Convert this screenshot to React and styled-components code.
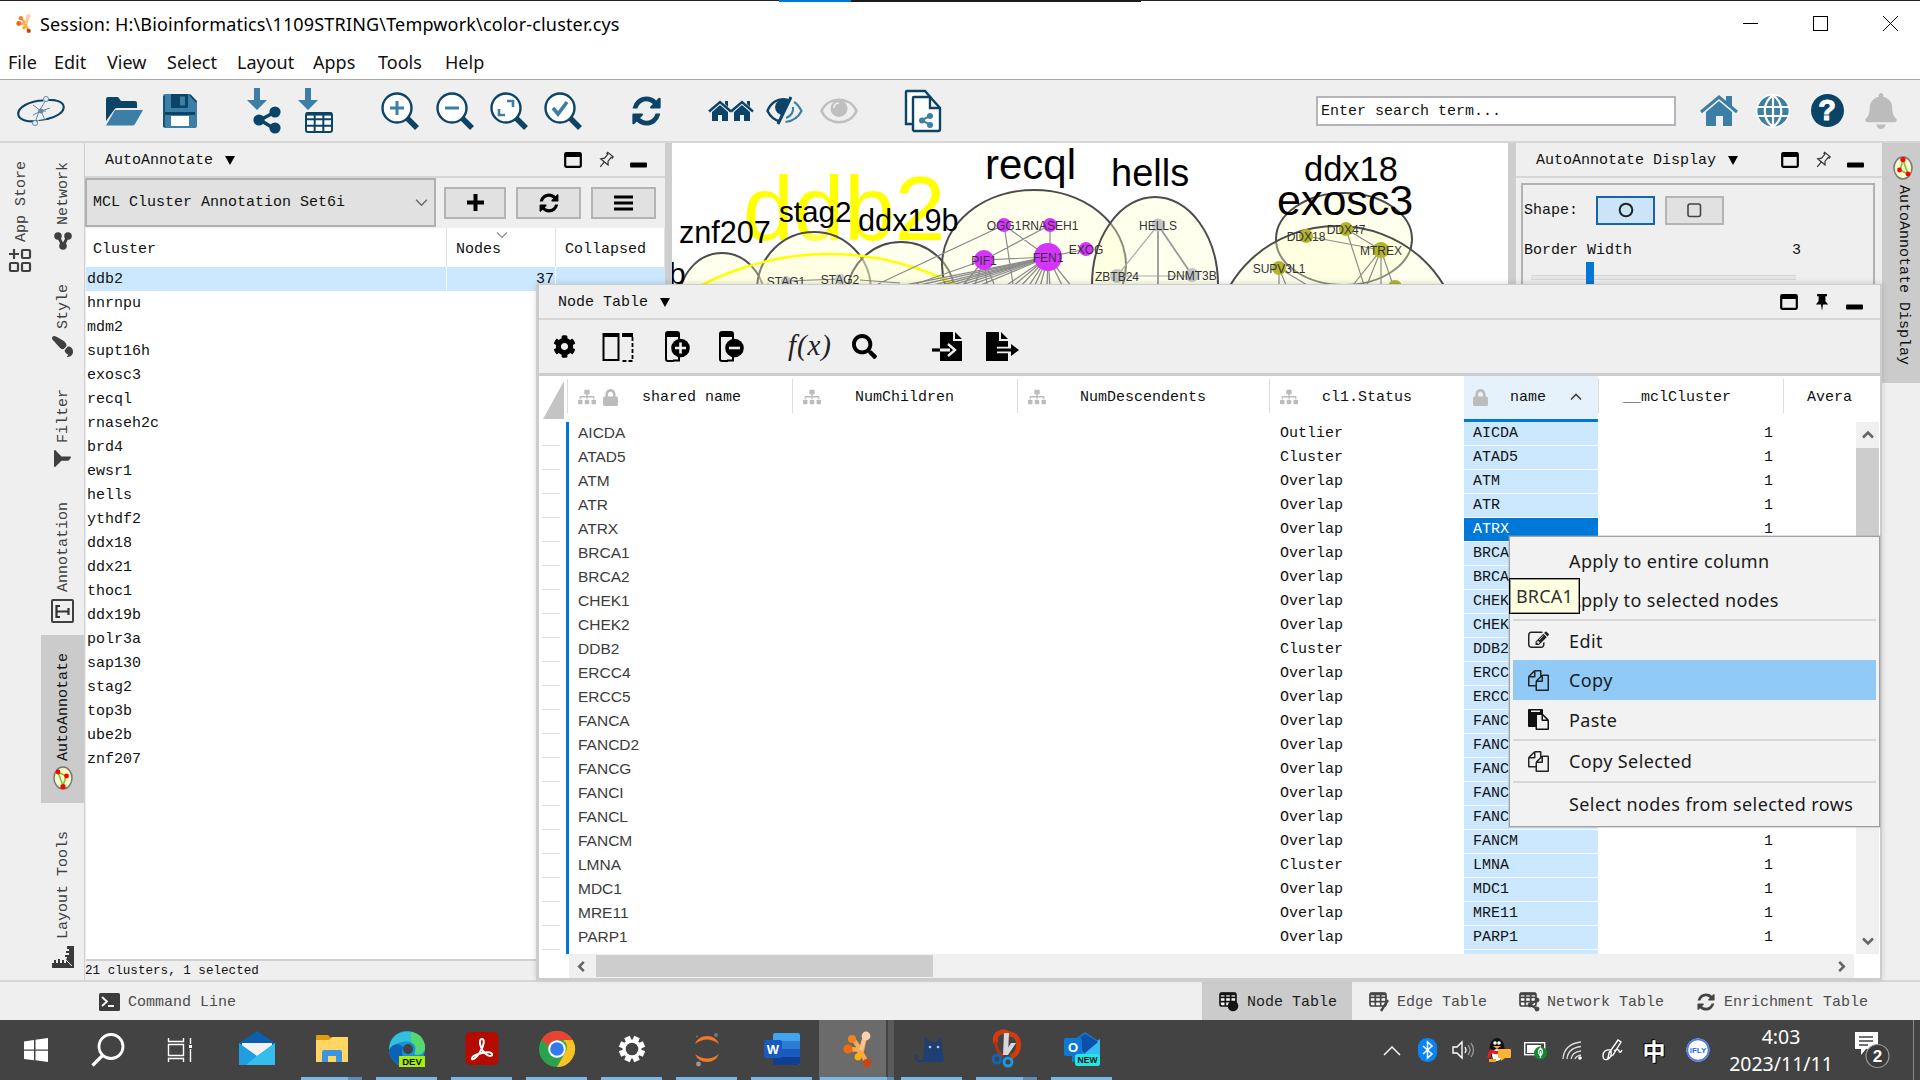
import React from "react";
import styled, { createGlobalStyle, css } from "styled-components";
import { FaSitemap, FaLock, FaCog, FaSearch, FaBell, FaFilter, FaPaintBrush } from "react-icons/fa";

const NAVY = "#0b4466";
const BLUE = "#3d7ea6";

const Global = createGlobalStyle`
  * { box-sizing: border-box; }
  html, body { margin: 0; padding: 0; overflow: hidden; background: #fff; }
  svg { display: block; flex: none; overflow: visible; }
`;

const mono = css`
  font-family: "Liberation Mono", "Courier New", monospace;
  font-size: 15px;
  white-space: pre;
`;
const ui = css`
  font-family: "Noto Sans", "Open Sans", sans-serif;
  font-size: 18px;
  white-space: pre;
`;

/* ---------- window shell ---------- */
const Screen = styled.div`
  position: relative;
  width: 1920px;
  height: 1080px;
  display: flex;
  flex-direction: column;
  overflow: hidden;
  background: #efefef;
  color: #111;
`;
const TopEdge = styled.div`
  height: 2px;
  display: flex;
  align-items: flex-start;
  background: #fff;
`;
const EdgePart = styled.i`
  width: ${(p) => p.$w}px;
  height: ${(p) => p.$h}px;
  background: ${(p) => p.$c};
`;
const TitleBar = styled.header`
  height: 43px;
  padding-left: 14px;
  display: flex;
  align-items: center;
  background: #fff;
`;
const Title = styled.div`
  ${ui}
  margin-left: 7px;
  flex: 1;
  color: #000;
  letter-spacing: 0.17px;
`;
const WindowButton = styled.div`
  width: 70px;
  padding-left: 10px;
  display: flex;
  justify-content: center;
`;
const MenuBar = styled.nav`
  height: 35px;
  display: flex;
  align-items: center;
  background: #fff;
  border-bottom: 1px solid #a9a9a9;
`;
const MenuTitle = styled.div`
  ${ui}
  width: ${(p) => p.$w}px;
  padding-left: 8px;
`;
const Toolbar = styled.div`
  height: 63px;
  border-bottom: 2px solid #d6d6d6;
  display: flex;
  align-items: center;
`;
const Tool = styled.div`
  width: ${(p) => p.$w || 54}px;
  display: flex;
  justify-content: center;
`;
const SearchBox = styled.div`
  ${mono}
  width: 360px;
  height: 30px;
  margin-left: 337px;
  margin-right: 16px;
  padding-left: 3px;
  line-height: 28px;
  border: 2px solid #b4b4ba;
  background: #fff;
`;
const Main = styled.div`
  height: 837px;
  display: flex;
`;

/* ---------- side tabs ---------- */
const TabStrip = styled.div`
  width: ${(p) => p.$w}px;
  display: flex;
  flex-direction: column;
`;
const SideTab = styled.div`
  height: ${(p) => p.$h}px;
  padding-top: ${(p) => p.$pt || 19}px;
  padding-left: ${(p) => p.$pl || 0}px;
  display: flex;
  flex-direction: column;
  align-items: center;
  gap: ${(p) => p.$gap || 7}px;
  background: ${(p) => (p.$on ? "#cbcbcb" : "transparent")};
  color: ${(p) => (p.$on ? "#111" : "#404040")};
`;
const SideText = styled.span`
  ${mono}
  writing-mode: vertical-rl;
  line-height: 20px;
  margin-left: ${(p) => (p.$down ? 0 : 2)}px;
  transform: ${(p) => (p.$down ? "none" : "rotate(180deg)")};
`;

/* ---------- dock panels ---------- */
const Panel = styled.section`
  width: ${(p) => p.$w}px;
  display: flex;
  flex-direction: column;
  border-left: 1px solid #d0d0d0;
`;
const Splitter = styled.div`
  width: 7px;
  background: #cecece;
`;
const PanelHead = styled.div`
  ${mono}
  height: 35px;
  flex: none;
  padding: 1px ${(p) => p.$pr}px 0 ${(p) => p.$pl}px;
  display: flex;
  align-items: center;
  border-bottom: 2px solid #d6d6d6;
`;
const Triangle = styled.i`
  margin-left: 12px;
  margin-right: auto;
  border: 5px solid transparent;
  border-top: 9px solid #000;
  border-bottom: 0;
`;
const HeadIcons = styled.div`
  display: flex;
  align-items: center;
  gap: 16px;
`;
const ControlRow = styled.div`
  height: 49px;
  flex: none;
  display: flex;
  align-items: center;
`;
const Combo = styled.div`
  ${mono}
  width: 351px;
  height: 49px;
  padding: 0 6px;
  display: flex;
  align-items: center;
  justify-content: space-between;
  background: #e1e1e1;
  border: 2px solid #b0b0b0;
`;
const PushButton = styled.div`
  width: ${(p) => p.$w}px;
  height: ${(p) => p.$h || 32}px;
  margin-left: ${(p) => p.$ml}px;
  display: flex;
  align-items: center;
  justify-content: center;
  background: ${(p) => (p.$on ? "#cce4f7" : "#e1e1e1")};
  border: 2px solid ${(p) => (p.$on ? "#1764a8" : "#b4b4b4")};
`;
const ClusterTable = styled.div`
  ${mono}
  flex: 1;
  margin: 1px 0 0 1px;
  background: #fff;
  border-bottom: 2px solid #cfcfcf;
`;
const ClusterHead = styled.div`
  height: 39px;
  display: grid;
  grid-template-columns: 361px 109px 1fr;
`;
const ClusterHeadCell = styled.div`
  position: relative;
  padding: 12px 0 0 ${(p) => (p.$first ? 7 : 9)}px;
  line-height: 20px;
  border-right: 1px solid #e2e2e2;
`;
const SortMark = styled.span`
  position: absolute;
  left: 49px;
  top: 1px;
`;
const ClusterRow = styled.div`
  height: 24px;
  display: grid;
  grid-template-columns: 361px 109px 1fr;
  line-height: 25px;
  background: ${(p) => (p.$on ? "#cce8ff" : "#fff")};
`;
const ClusterCell = styled.div`
  height: 24px;
  padding: 0 1px;
  text-align: ${(p) => (p.$num ? "right" : "left")};
  border-right: 1px solid #fff;
`;
const ClusterStatus = styled.div`
  ${mono}
  font-size: 12.6px;
  height: 19px;
  line-height: 21px;
`;

/* ---------- network canvas frame ---------- */
const Centre = styled.div`
  width: 836px;
  background: #fff;
`;
const CanvasFrame = styled.div`
  width: 836px;
  height: 142px;
  overflow: hidden;
`;

/* ---------- display options ---------- */
const OptionsBox = styled.div`
  ${mono}
  flex: 1;
  margin: 5px 7px 0 5px;
  border: 2px solid #b2b2b2;
`;
const OptionRow = styled.div`
  display: flex;
  align-items: center;
  height: ${(p) => p.$h}px;
  margin-top: ${(p) => p.$mt}px;
  padding-left: 1px;
`;
const OptionValue = styled.span`
  margin-left: 160px;
`;
const Slider = styled.div`
  width: 265px;
  height: 22px;
  margin: 2px 0 0 8px;
  padding-left: 55px;
  background: linear-gradient(#d6d6d6, #d6d6d6) 0 13px / 265px 1px no-repeat,
    linear-gradient(#e6e6e6, #e6e6e6) 0 14px / 265px 3px no-repeat,
    linear-gradient(#d6d6d6, #d6d6d6) 0 17px / 265px 1px no-repeat;
`;
const Thumb = styled.div`
  width: 8px;
  height: 28px;
  background: #0078d7;
`;

/* ---------- node table ---------- */
const TablePanel = styled.section`
  position: absolute;
  left: 536px;
  top: 284px;
  width: 1346px;
  height: 696px;
  display: flex;
  flex-direction: column;
  background: #efefef;
  border: solid #cdcdcd;
  border-width: 1px 2px 2px 3px;
  box-shadow: 0 -1px 6px rgba(0, 0, 0, 0.14);
`;
const TableTools = styled.div`
  height: 56px;
  flex: none;
  padding-left: 14px;
  display: flex;
  align-items: center;
  border-bottom: 3px solid #cdcdcd;
`;
const Fx = styled.span`
  font: italic 29px/30px "Liberation Serif", serif;
  letter-spacing: 0.9px;
  margin-top: -3px;
  color: #222;
`;
const TableHead = styled.div`
  ${mono}
  height: 46px;
  flex: none;
  display: flex;
  background: #fff;
`;
const Corner = styled.div`
  width: 28px;
  padding: 5px 0 0 4px;
`;
const HeadCell = styled.div`
  width: ${(p) => p.$w}px;
  height: 46px;
  padding: 0 0 4px ${(p) => (p.$on ? 8 : 11)}px;
  display: flex;
  align-items: center;
  color: #111;
  background: ${(p) =>
    p.$on
      ? "linear-gradient(#0078d7, #0078d7) 0 100% / 100% 3px no-repeat, #e5f1fb"
      : "linear-gradient(#ddd, #ddd) 0 3px / 1px 34px no-repeat"};
`;
const HeadIcon = styled.span`
  width: 24px;
  color: #bcbcbc;
`;
const HeadText = styled.span`
  margin-left: ${(p) => p.$ml}px;
`;
const TableBody = styled.div`
  height: 532px;
  flex: none;
  display: flex;
  overflow: hidden;
  background: #fff;
`;
const Rows = styled.div`
  flex: 1;
`;
const Row = styled.div`
  ${mono}
  height: 24px;
  display: flex;
  line-height: 23px;
`;
const Gutter = styled.div`
  width: 30px;
  border-right: 3px solid #0078d7;
  background: linear-gradient(#dcdcdc, #dcdcdc) 3px 23px / 18px 1px no-repeat;
`;
const SharedCell = styled.div`
  width: 711px;
  padding-left: 9px;
  line-height: 21px;
  font-family: "Liberation Sans", Arial, sans-serif;
  font-size: 15.5px;
  color: #3c3c3c;
`;
const StatusCell = styled.div`
  width: 184px;
`;
const NameCell = styled.div`
  width: 134px;
  height: 23px;
  padding-left: 9px;
  color: ${(p) => (p.$on ? "#fff" : "#111")};
  background: ${(p) => (p.$on ? "#0078d7" : "#cce8ff")};
`;
const NumCell = styled.div`
  width: 175px;
  text-align: right;
`;
const VScroll = styled.div`
  width: 23px;
  margin-right: 1px;
  display: flex;
  flex-direction: column;
  align-items: center;
  background: #f0f0f0;
`;
const ScrollEnd = styled.div`
  height: 26px;
  display: flex;
  align-items: center;
`;
const VThumb = styled.div`
  width: 23px;
  height: 180px;
  margin-bottom: auto;
  background: #cdcdcd;
`;
const HScroll = styled.div`
  flex: 1;
  display: flex;
  align-items: center;
  background: #fff;
`;
const HTrack = styled.div`
  width: 1285px;
  height: 24px;
  margin-left: 30px;
  padding: 0 7px;
  display: flex;
  align-items: center;
  background: #f0f0f0;
`;
const HThumb = styled.div`
  width: 337px;
  height: 22px;
  margin: 0 auto 0 9px;
  background: #cdcdcd;
`;

/* ---------- context menu ---------- */
const ContextMenu = styled.div`
  position: absolute;
  left: 1509px;
  top: 536px;
  width: 371px;
  height: 291px;
  padding: 4px 3px 0;
  display: flex;
  flex-direction: column;
  background: #f2f2f2;
  border: 1px solid #a0a0a0;
  box-shadow: 0 0 0 1px rgba(160, 160, 160, 0.35);
`;
const MenuItem = styled.div`
  ${ui}
  height: ${(p) => p.$h || 40}px;
  display: flex;
  align-items: center;
  color: #1a1a1a;
  letter-spacing: 0.4px;
  background: ${(p) => (p.$on ? "#91c9f7" : "transparent")};
`;
const MenuIcon = styled.span`
  width: 56px;
  padding-left: 15px;
`;
const MenuRule = styled.hr`
  width: 100%;
  height: 2px;
  margin: 0;
  border: 0;
  background: #d7d7d7;
`;
const Tooltip = styled.div`
  ${ui}
  position: absolute;
  left: 1509px;
  top: 578px;
  width: 71px;
  height: 36px;
  line-height: 34px;
  text-align: center;
  letter-spacing: 0.2px;
  color: #333;
  background: #ffffe1;
  border: 1px solid #000;
  outline: 1px solid rgba(0, 0, 0, 0.4);
  outline-offset: -2px;
`;

/* ---------- bottom bars ---------- */
const BottomBar = styled.div`
  ${mono}
  height: 40px;
  display: flex;
  align-items: center;
  border-top: 2px solid #d6d6d6;
  color: #4c4c4c;
`;
const CommandLine = styled.div`
  margin: 2px auto 0 99px;
  display: flex;
  align-items: center;
  gap: 8px;
`;
const BottomTab = styled.div`
  width: ${(p) => p.$w}px;
  height: 38px;
  padding: 2px 0 0 17px;
  display: flex;
  align-items: center;
  gap: 8px;
  color: ${(p) => (p.$on ? "#1c1c1c" : "#4c4c4c")};
  background: ${(p) => (p.$on ? "#cbcbcb" : "transparent")};
`;
const Taskbar = styled.footer`
  height: 60px;
  display: flex;
  background: #434343;
  color: #fff;
`;
const SystemButton = styled.div`
  width: 72px;
  display: flex;
  align-items: center;
  justify-content: center;
`;
const AppButton = styled.div`
  width: 75px;
  height: 60px;
  margin-left: ${(p) => p.$ml || 0}px;
  display: grid;
  grid-template-rows: 57px 3px;
  justify-items: center;
  align-items: center;
  background: ${(p) => (p.$on ? "linear-gradient(90deg, #6b6b6b 67px, #434343 67px 69px, #5a5a5a 69px)" : "none")};
`;
const Running = styled.i`
  width: ${(p) => (p.$wide ? 74 : 61)}px;
  height: 3px;
  background: ${(p) =>
    p.$stack ? `linear-gradient(90deg, #76b9ed ${p.$wide ? 67 : 47}px, #5a8db4 ${p.$wide ? 67 : 47}px)` : "#76b9ed"};
`;
const Tray = styled.div`
  margin-left: auto;
  width: 546px;
  display: flex;
  align-items: center;
`;
const TrayItem = styled.div`
  width: ${(p) => p.$w}px;
  display: flex;
  justify-content: center;
`;
const Ime = styled.span`
  font: bold 23px/30px "Noto Sans CJK SC", sans-serif;
  text-shadow: 0 0 1px #000, 1px 1px 0 #000, -1px -1px 0 #000;
`;
const Clock = styled.div`
  width: 110px;
  margin-left: 4px;
  font: 19.5px/27px "Noto Sans", sans-serif;
  text-align: center;
`;
const DesktopPeek = styled.i`
  width: 1px;
  height: 60px;
  margin-left: auto;
  margin-right: 6px;
  background: #8a8a8a;
`;

/* ---------- icons ---------- */
const Glyph = ({ d, size = 20, color = "currentColor", w }) => (
  <svg width={w || size} height={size} viewBox="0 0 1792 1792" preserveAspectRatio="none" fill={color}>
    <path d={d} />
  </svg>
);
const REFRESH =
  "M1639 1056q0 5-1 7-64 268-268 434.5t-478 166.5q-146 0-282.5-55t-243.5-157l-129 129q-19 19-45 19t-45-19-19-45v-448q0-26 19-45t45-19h448q26 0 45 19t19 45-19 45l-137 137q71 66 161 102t187 36q134 0 250-65t186-179q11-17 53-117 8-23 30-23h192q13 0 22.5 9.5t9.5 22.5zm25-800v448q0 26-19 45t-45 19h-448q-26 0-45-19t-19-45 19-45l138-138q-148-137-349-137-134 0-250 65t-186 179q-11 17-53 117-8 23-30 23h-199q-13 0-22.5-9.5t-9.5-22.5v-7q65-268 270-434.5t480-166.5q146 0 284 55.5t245 156.5l130-129q19-19 45-19t45 19 19 45z";
const COPY =
  "M1696 384q40 0 68 28t28 68v1216q0 40-28 68t-68 28h-960q-40 0-68-28t-28-68v-288h-544q-40 0-68-28t-28-68v-672q0-40 20-88t48-76l408-408q28-28 76-48t88-20h416q40 0 68 28t28 68v328q68-40 128-40h416zm-544 213l-299 299h299v-299zm-640-384l-299 299h299v-299zm196 647l316-316v-416h-384v416q0 40-28 68t-68 28h-416v640h512v-256q0-40 20-88t48-76zm956 804v-1152h-384v416q0 40-28 68t-68 28h-416v640h896z";
const PASTE =
  "M768 1664h896v-640h-416q-40 0-68-28t-28-68v-416h-384v1152zm256-1440v-64q0-13-9.5-22.5t-22.5-9.5h-704q-13 0-22.5 9.5t-9.5 22.5v64q0 13 9.5 22.5t22.5 9.5h704q13 0 22.5-9.5t9.5-22.5zm256 672h299l-299-299v299zm512 128v672q0 40-28 68t-68 28h-960q-40 0-68-28t-28-68v-160h-544q-40 0-68-28t-28-68v-1344q0-40 28-68t68-28h1088q40 0 68 28t28 68v328q21 13 36 28l408 408q28 28 48 76t20 88z";
const EDIT =
  "M888 1184l116-116-152-152-116 116v56h96v96h56zm440-720q-16-16-33 1l-350 350q-17 17-1 33t33-1l350-350q17-17 1-33zm80 594v190q0 119-84.5 203.5t-203.5 84.5h-832q-119 0-203.5-84.5t-84.5-203.5v-832q0-119 84.5-203.5t203.5-84.5h832q63 0 117 25 15 7 18 23 3 17-9 29l-49 49q-14 14-32 8-23-6-45-6h-832q-66 0-113 47t-47 113v832q0 66 47 113t113 47h832q66 0 113-47t47-113v-126q0-13 9-22l64-64q15-15 35-7t20 29zm-96-738l288 288-672 672h-288v-288zm444 132l-92 92-288-288 92-92q28-28 68-28t68 28l152 152q28 28 28 68t-28 68z";

const Svg = ({ w, h, vb, children }) => (
  <svg width={w} height={h} viewBox={vb || `0 0 ${w} ${h}`} fill="none">
    {children}
  </svg>
);
const Chevron = ({ dir = "down", w = 12, color = "#666", sw = 1.6 }) => {
  const turn = { down: 0, up: 180, left: 90, right: -90 }[dir];
  return (
    <Svg w={w} h={w} vb="0 0 12 12">
      <path d="M1 3.5l5 5 5-5" stroke={color} strokeWidth={sw} transform={`rotate(${turn} 6 6)`} />
    </Svg>
  );
};
const CytoLogo = ({ s }) => (
  <Svg w={s} h={s} vb="0 0 36 36">
    <g stroke="#f9a94e" strokeWidth="4.5" strokeLinecap="round">
      <path d="M26 5l-3 14-13-1M14 8l8 11-3 7M21 19l7 13" />
    </g>
    <path d="M25 8l-3 11" stroke="#fcc48e" strokeWidth="4" />
    <circle cx="27" cy="5" r="4.4" fill="#fbd0b0" />
    <circle cx="13" cy="8" r="4" fill="#f5821f" />
    <circle cx="9" cy="18" r="4.6" fill="#f26a0f" />
    <circle cx="19" cy="26" r="3.4" fill="#ffb300" />
    <circle cx="28" cy="32" r="4" fill="#d2420c" />
  </Svg>
);
const DockIcons = ({ pinned }) => (
  <HeadIcons>
    <Svg w={18} h={16}>
      <rect x="1.2" y="1.2" width="15.6" height="13.6" rx="1" stroke="#000" strokeWidth="2.2" />
      <path d="M1 1h16v4H1z" fill="#000" />
    </Svg>
    <Svg w={16} h={17}>
      {pinned ? (
        <path d="M3 0h10v2.3h-1.6v5l2.8 3.3H9l-1 6.4-1-6.4H1.8l2.8-3.3v-5H3z" fill="#000" />
      ) : (
        <g transform="rotate(40 8 8)">
          <path d="M4.5 1h7v1.5h-1.2v5l2.5 3H3.2l2.5-3v-5H4.500zM8 10.500V17" stroke="#333" strokeWidth="1.2" />
        </g>
      )}
    </Svg>
    <Svg w={17} h={16}>
      <rect y="10.5" width="17" height="5" rx="1" fill="#000" />
    </Svg>
  </HeadIcons>
);
const RingLogo = () => (
  <Svg w={50} h={30}>
    <g transform="rotate(-9 25 15)">
      <path d="M29 5C15 3 2 8 2 15c0 6 9 9 18 9.5" stroke={NAVY} strokeWidth="2.2" />
      <path d="M30 5c11 0 19 4 18 10-1 6-13 10-27 9" stroke={NAVY} strokeWidth="1.2" />
      <path d="M30 5c11 .5 19 4 18 10-1 5-9 8.5-19 9" stroke={NAVY} strokeWidth="2" />
    </g>
    <g stroke="#5d8ba8" strokeWidth="1">
      <path d="M30 4l-7 11-4 12M17 9l8 6 9-3M25 15l-8 4M25 15l4 9M22 15h8" />
      <circle cx="30" cy="3" r="2.5" fill="#efefef" />
      <circle cx="19" cy="27" r="2.5" fill="#efefef" />
    </g>
    <circle cx="25" cy="15" r="2.5" fill="#5d8ba8" />
  </Svg>
);
const Folder = () => (
  <Svg w={38} h={30}>
    <path d="M1 25V3q0-2 2-2h10l3 4h14q2 0 2 2v5H12q-2 0-3 2z" fill={NAVY} />
    <path d="M10 14h28l-8 14q-1 1.500-3 1.500H1z" fill={BLUE} />
  </Svg>
);
const Floppy = () => (
  <Svg w={34} h={34}>
    <path d="M2 0h25l7 7v25q0 2-2 2H2q-2 0-2-2V2q0-2 2-2z" fill={BLUE} />
    <path d="M8 0h17v13q0 1-1 1H9q-1 0-1-1zM2 18h30v3H2z" fill={NAVY} />
    <path d="M17 2.500h5v9h-5z" fill={BLUE} />
    <path d="M1 2v31M27 1l6.500 7" stroke={NAVY} strokeWidth="1.500" />
    <path d="M8 22h18v10H8z" fill="#fff" />
  </Svg>
);
const Arrow = () => <path d="M7 0h6v12h7L10 22 0 12h7z" fill={BLUE} />;
const ImportNet = () => (
  <Svg w={34} h={46}>
    <Arrow />
    <path d="M28 24L13 32l15 9" stroke={NAVY} strokeWidth="3.5" />
    <circle cx="28" cy="24" r="5.6" fill={NAVY} />
    <circle cx="12" cy="32" r="5.6" fill={NAVY} />
    <circle cx="28" cy="40" r="5.6" fill={NAVY} />
  </Svg>
);
const Grid = ({ x = 0, y = 0, w, h, c, sw = 2 }) => (
  <g transform={`translate(${x} ${y})`} stroke={c} strokeWidth={sw}>
    <rect width={w} height={h} rx="2" fill="#fff" />
    <path d={`M0 ${h / 3}H${w}M0 ${(2 * h) / 3}H${w}M${w / 3} 0V${h}M${(2 * w) / 3} 0V${h}`} />
    <path d={`M0 1H${w}`} strokeWidth={sw * 1.6} />
  </g>
);
const ImportTable = () => (
  <Svg w={36} h={46}>
    <Arrow />
    <Grid x={8} y={25} w={26} h={19} c={NAVY} />
  </Svg>
);
const Lens = ({ children }) => (
  <Svg w={38} h={38}>
    <path d="M24 24l12 12" stroke={NAVY} strokeWidth="5.5" />
    <circle cx="16" cy="16" r="14.5" fill="#fff" stroke={NAVY} strokeWidth="2.4" />
    <g stroke={BLUE} strokeWidth="3">{children}</g>
  </Svg>
);
const Houses = () => (
  <Svg w={46} h={22}>
    {[0, 22].map((x) => (
      <g key={x} transform={`translate(${x} 0)`}>
        <path d="M1 11.500L12 2l11 9.500" stroke={NAVY} strokeWidth="2.4" />
        <path d="M12 5l8 7v9h-6v-6h-4v6H4v-9zM17 1h3v6l-3-3z" fill={NAVY} />
      </g>
    ))}
  </Svg>
);
const EyeOff = () => (
  <Svg w={37} h={28}>
    <path d="M22 3C11 0 4 7 1.500 14 4 19 8 23 14 24.500" stroke={NAVY} strokeWidth="2.4" />
    <path d="M22 4a8 8 0 1 0-7 14z" fill={NAVY} />
    <path d="M25 0L12 27" stroke={NAVY} strokeWidth="3" />
    <path d="M28 5c4 2 6 6 7.500 9-3 6-8 10-16 11" stroke={BLUE} strokeWidth="2.2" />
    <path d="M27 10q1 8-7 11" stroke={BLUE} strokeWidth="2" />
  </Svg>
);
const Eye = () => (
  <Svg w={38} h={26}>
    <path d="M1.500 13C8-2 30-2 36.500 13 30 28 8 28 1.500 13z" stroke="#bfbfbf" strokeWidth="2.6" />
    <circle cx="19" cy="10.5" r="8.5" fill="#bfbfbf" />
    <path d="M14 10q0-5 5-5" stroke="#efefef" strokeWidth="1.5" />
  </Svg>
);
const NetDocs = () => (
  <Svg w={38} h={42}>
    <path d="M2 34V2q0-1 1-1h18l6 7v26z" fill="#fff" stroke={NAVY} strokeWidth="2.4" />
    <path d="M9 40V8q0-1 1-1h16l10 11v21q0 2-2 2H10z" fill="#fff" stroke={NAVY} strokeWidth="2.4" />
    <path d="M26 7v11h10" stroke={NAVY} strokeWidth="2.4" />
    <path d="M26 26l-8 4 8 5" stroke={BLUE} strokeWidth="2" />
    <circle cx="26" cy="26" r="3" fill={BLUE} />
    <circle cx="18" cy="30.5" r="3" fill={BLUE} />
    <circle cx="26" cy="35" r="3" fill={BLUE} />
  </Svg>
);
const HomeIcon = () => (
  <Svg w={38} h={32}>
    <path d="M1 17L19 2l18 15" stroke={BLUE} strokeWidth="3" />
    <path d="M19 6l13 11v14h-9V21h-7v10H6V17zM26 1h6v11l-6-5z" fill={BLUE} />
  </Svg>
);
const Globe = () => (
  <Svg w={34} h={34}>
    <circle cx="17" cy="17" r="17" fill="#fff" />
    <circle cx="17" cy="17" r="15.6" fill={BLUE} />
    <g stroke="#fff" strokeWidth="2.2">
      <path d="M17 0v34M0 13h34M0 22h34" />
      <path d="M17 1C6 9 6 25 17 33M17 1c11 8 11 24 0 32" />
    </g>
  </Svg>
);
const HelpDisc = styled.div`
  width: 33px;
  height: 33px;
  border-radius: 50%;
  background: ${NAVY};
  color: #fff;
  text-align: center;
  font: bold 29px/33px "Liberation Sans", sans-serif;
  -webkit-text-stroke: 1px #fff;
`;
const AnnotateIcon = ({ flip }) => (
  <svg width="22" height="24" viewBox="0 0 22 24">
    <g transform={flip ? "rotate(180 11 12)" : undefined}>
      <ellipse cx="11" cy="12" rx="9" ry="11" fill="#fbfbc8" stroke="#777" strokeWidth="1.5" />
      <path d="M6 6l5 14M6 6l8 4-3 10" stroke="#7bc143" strokeWidth="1.6" fill="none" />
      <circle cx="6" cy="6" r="2.4" fill="#f00" />
      <circle cx="14.5" cy="10" r="2.4" fill="#f00" />
      <circle cx="11" cy="20.5" r="2.6" fill="#f00" />
    </g>
  </svg>
);
const StoreIcon = () => (
  <Svg w={25} h={26}>
    <path d="M6 1v10M1 6h10" stroke="#404040" strokeWidth="2.2" />
    <g stroke="#404040" strokeWidth="2.2">
      <rect x="14" y="2" width="8" height="8" rx="1" />
      <rect x="2" y="15" width="8" height="8" rx="1" />
      <rect x="14" y="15" width="8" height="8" rx="1" />
    </g>
  </Svg>
);
const NetworkTabIcon = () => (
  <Svg w={18} h={18}>
    <path d="M4 4l5 10 5-10" stroke="#404040" strokeWidth="3" />
    <circle cx="4" cy="4" r="3.8" fill="#404040" />
    <circle cx="14" cy="4" r="3.8" fill="#404040" />
    <circle cx="9" cy="14" r="3.8" fill="#404040" />
  </Svg>
);
const Rotated = styled.span`
  display: block;
  transform: rotate(${(p) => p.$deg}deg);
`;
const Boxed = styled.div`
  width: 23px;
  height: 24px;
  border: 2px solid #404040;
  border-radius: 2px;
  display: flex;
  align-items: center;
  justify-content: center;
`;
const Ruler = () => (
  <Svg w={22} h={22}>
    <path d="M22 0v22H0v-5h2v-3h2v3h2v-4h2v4h2v-3h2v3h2v-3l1-2v-1h-2v-2h4V7h-3V5h3V3h-2V0z" fill="#3a3a3a" />
    <path d="M13 13l7 7" stroke="#efefef" />
  </Svg>
);
const TableGlyph = ({ kind }) => {
  const c = kind === "node" ? "#151515" : "#444";
  return (
    <Svg w={20} h={20}>
      <Grid x={1} y={1} w={16} h={13} c={c} sw={1.7} />
      {kind === "node" && <circle cx="14" cy="14" r="5.3" fill={c} />}
      {kind === "edge" && <path d="M19 8l-7 11" stroke={c} strokeWidth="2.4" />}
      {kind === "net" && (
        <g fill={c} stroke={c}>
          <path d="M18 8l-7 5 7 4" fill="none" strokeWidth="2" />
          <circle cx="18" cy="8" r="2" />
          <circle cx="11" cy="13" r="2" />
          <circle cx="18" cy="17" r="2" />
        </g>
      )}
    </Svg>
  );
};
const Columns = () => (
  <Svg w={32} h={30}>
    <path d="M1.500 28V2h15v26z" stroke="#000" strokeWidth="2" />
    <path d="M1 1h16v4H1zM20 1h11v4H20z" fill="#000" />
    <path d="M30.500 5v24H19" stroke="#000" strokeWidth="1.8" strokeDasharray="4 2" />
  </Svg>
);
const ColumnOp = ({ plus }) => (
  <Svg w={25} h={31}>
    <path d="M9 30H3q-2 0-2-2V3q0-2 2-2h9q2 0 2 2v6" stroke="#000" strokeWidth="2" />
    <path d="M2 1h12v5H2z" fill="#000" />
    <path d="M8 29.500h6V25" stroke="#000" strokeWidth="2" />
    <circle cx="15.5" cy="17" r="9.3" fill="#000" />
    <path d={plus ? "M10 17h11M15.500 11.500v11" : "M10 17h11"} stroke="#efefef" strokeWidth="2.6" />
  </Svg>
);
const FileArrow = ({ out }) => (
  <Svg w={34} h={30}>
    <path d={out ? "M1 0h13v9h9v20H1zM16 0l7 7h-7z" : "M8 0h13v9h9v20H8zM23 0l7 7h-7z"} fill="#000" />
    {out ? (
      <>
        <path d="M12 18h14" stroke="#efefef" strokeWidth="6.5" />
        <path d="M12 18h16" stroke="#000" strokeWidth="3" />
        <path d="M26 12l8 6-8 6z" fill="#000" />
      </>
    ) : (
      <>
        <path d="M0 18h8" stroke="#000" strokeWidth="3.2" />
        <path d="M8 18h10" stroke="#efefef" strokeWidth="3" />
        <path d="M16 12l7 6-7 6" stroke="#efefef" strokeWidth="2.4" />
      </>
    )}
  </Svg>
);

/* ---------- network canvas ---------- */
const CLUSTERS = [
  [722, 301, 43, 48], [814, 290, 57, 58], [901, 296, 54, 54], [1034, 265, 92, 75],
  [1155, 285, 63, 88], [1344, 239, 68, 46], [1337, 341, 122, 115],
];
const LABELS = [
  ["znf207", 679, 243, 30.6], ["stag2", 779, 222, 29.7], ["ddx19b", 858, 231, 30.7], ["recql", 985, 179, 42],
  ["hells", 1111, 186, 38], ["ddx18", 1304, 181, 34.5], ["exosc3", 1277, 215, 43], ["b", 669, 284, 30],
];
const NODES = [
  ["OGG1", 1004, 225, 7, "#d633ff"], ["RNASEH1", 1050, 225, 7, "#d633ff"], ["FEN1", 1048, 257, 14, "#d633ff"],
  ["PIF1", 984, 260, 10, "#d633ff"], ["EXOG", 1086, 249, 7, "#d633ff"],
  ["STAG1", 786, 281, 5, "#c9c9c9"], ["STAG2", 840, 279, 5, "#c9c9c9"],
  ["HELLS", 1158, 225, 6.5, "#c4c4c4"], ["ZBTB24", 1117, 276, 7, "#c4c4c4"], ["DNMT3B", 1192, 275, 7, "#c4c4c4"],
  ["DDX18", 1306, 236, 7, "#b4b42c"], ["DDX47", 1346, 229, 7, "#b4b42c"], ["MTREX", 1381, 250, 8, "#b4b42c"],
  ["SUPV3L1", 1279, 268, 7, "#b4b42c"], ["", 1395, 287, 7, "#b4b42c"],
];
const FAN = [895, 910, 925, 935, 945, 955, 965, 976, 1004, 1012, 1020, 1028, 1034, 1040, 1047, 1050, 1063, 1072];
const NetworkCanvas = () => (
  <CanvasFrame>
    <svg width="836" height="142" viewBox="672 143 836 142" fontFamily='"Liberation Sans", Arial, sans-serif'>
      <text x="743" y="240" fontSize="91" fill="#ff0">ddb2</text>
      {CLUSTERS.map(([x, y, rx, ry]) => (
        <ellipse key={x} cx={x} cy={y} rx={rx} ry={ry} fill="#ffffcc" fillOpacity=".36" stroke="#4c4c4c" strokeWidth="2" />
      ))}
      <circle cx="829" cy="529" r="275" fill="#ffffcc" fillOpacity=".3" stroke="#ff0" strokeWidth="2.6" />
      <text x="743" y="240" fontSize="91" fill="#ff0" fillOpacity=".8" aria-hidden="true" />
      <g stroke="#8c8c8c" strokeWidth="1.2" fill="none">
        <path d="M1004 225L878 284M1004 225l44 32M1004 225l9 59M1050 225v32M1050 225l-66 35M984 260l64-3M1048 257l38-8M984 260l-68 24M984 260l-9 24M984 260l3 24M984 260l10 24M984 260l-20 24M786 281l54-2M860 280l40 3" />
        <path d="M1158 225l-41 51M1117 276h75" stroke="#aaa" />
        <path d="M1158 225v60M1158 225l34 50" strokeWidth="1.8" stroke="#999" />
        <path d="M1306 236l75 14M1346 229l35 21M1346 229l18 56M1381 250l-28 35M1381 250l-14 35M1381 250v35M1381 250l12 35M1279 268v17M1279 268l7 17M1279 268l28 17" />
      </g>
      <g stroke="#8c8c8c" strokeWidth="1.3">
        {FAN.map((x) => (
          <line key={x} x1="1048" y1="257" x2={x} y2="287" />
        ))}
      </g>
      {NODES.map(([t, x, y, r, c]) => (
        <circle key={t} cx={x} cy={y} r={r} fill={c} />
      ))}
      <g fontSize="12" fill="#333" textAnchor="middle">
        {NODES.filter(([t]) => t).map(([t, x, y]) => (
          <text key={t} x={x} y={y + 4.5}>{t}</text>
        ))}
      </g>
      {LABELS.map(([t, x, y, s]) => (
        <text key={t} x={x} y={y} fontSize={s} fill="#000">{t}</text>
      ))}
    </svg>
  </CanvasFrame>
);

/* ---------- data ---------- */
const MENUS = [["File", 46], ["Edit", 53], ["View", 60], ["Select", 70], ["Layout", 76], ["Apps", 65], ["Tools", 67], ["Help", 60]];
const CLUSTER_NAMES = "ddb2 hnrnpu mdm2 supt16h exosc3 recql rnaseh2c brd4 ewsr1 hells ythdf2 ddx18 ddx21 thoc1 ddx19b polr3a sap130 stag2 top3b ube2b znf207".split(" ");
const GENES = "AICDA ATAD5 ATM ATR ATRX BRCA1 BRCA2 CHEK1 CHEK2 DDB2 ERCC4 ERCC5 FANCA FANCD2 FANCG FANCI FANCL FANCM LMNA MDC1 MRE11 PARP1".split(" ");
const statusOf = (g) => (g === "AICDA" ? "Outlier" : ["ATAD5", "DDB2", "LMNA"].includes(g) ? "Cluster" : "Overlap");

/* ---------- taskbar art ---------- */
const BadgeText = ({ children, ...p }) => (
  <text fontFamily='"Liberation Sans", sans-serif' fontWeight="bold" textAnchor="middle" {...p}>{children}</text>
);
const APPS = [
  { id: "mail", art: <>
    <path d="M0 12L18 0l18 12v4H0z" fill="#0a5fae" /><path d="M3 12h30v14H3z" fill="#f2f2f2" />
    <path d="M0 12l18 13L36 12v22H0z" fill="#1e9fe4" /><path d="M36 12L18 25 7 34h29z" fill="#3cc8f0" opacity=".75" /></> },
  { id: "explorer", run: 1, stack: 1, art: <>
    <path d="M2 5q0-1 1-1h11l3 3v4H2z" fill="#e29c0b" /><path d="M2 9h13l3-3h16v25H2z" fill="#ffd566" />
    <path d="M8 31V21q0-2 2-2h16q2 0 2 2v10h-6v-6h-8v6z" fill="#3d93dd" /></> },
  { id: "edge", run: 1, art: <>
    <circle cx="18" cy="18" r="18" fill="#1593d6" /><path d="M2 10C8-3 32-4 36 15c1 7-5 10-11 8 5-9-4-14-11-12C7 12 3 15 0 19q0-5 2-9z" fill="#33c0dc" />
    <path d="M22 1c9 1 14 8 14 15s-6 9-11 7c4-6 1-10-3-12z" fill="#55d96d" /><path d="M14 16c-3 8 1 14 8 17-10 5-22-3-22-14 3-6 9-8 14-3z" fill="#0b62b8" />
    <circle cx="19" cy="18" r="5" fill="#434343" /><rect x="10" y="25" width="26" height="11" fill="#a5ee10" />
    <BadgeText x="23" y="34.3" fontSize="9.5" fill="#111">DEV</BadgeText></> },
  { id: "acrobat", run: 1, art: <>
    <rect x="1.5" y="1" width="33" height="33" rx="5" fill="#b30b00" />
    <path d="M18 8c3 0 2 7-2 13-4 7-9 9-8 6 1-4 19-8 20-4 1 4-8 2-11-7-2-5-1-8 1-8z" stroke="#fff" strokeWidth="2" fill="none" /></> },
  { id: "chrome", run: 1, art: <>
    <circle cx="18" cy="18" r="18" fill="#2ba24c" /><path d="M2.400 9A18 18 0 0 1 33.600 9H18a9 9 0 0 0-8 6z" fill="#ea4335" />
    <path d="M33.600 9A18 18 0 0 1 18 36l8-14a9 9 0 0 0-2-13z" fill="#fcc31e" /><circle cx="18" cy="18" r="8.8" fill="#fff" /><circle cx="18" cy="18" r="6.8" fill="#3079ee" /></> },
  { id: "settings", run: 1, art: <>
    <g stroke="#fff" strokeWidth="6">{[0, 45, 90, 135].map((a) => <path key={a} d="M18 5v26" transform={`rotate(${a + 22.5} 18 18)`} />)}</g>
    <circle cx="18" cy="18" r="9.5" fill="#fff" /><circle cx="18" cy="18" r="6.3" fill="#434343" /></> },
  { id: "jupyter", run: 1, art: <>
    <path d="M6 13a13 13 0 0 1 24 0Q18 4 6 13zM6 23a13 13 0 0 0 24 0Q18 32 6 23z" fill="#f37726" />
    <circle cx="27" cy="4" r="2" fill="#777" /><circle cx="8" cy="5.5" r="1" fill="#777" /><circle cx="9.5" cy="33" r="2.4" fill="#9a9a9a" /></> },
  { id: "word", run: 1, art: <>
    <rect x="9" y="2" width="27" height="32" rx="2" fill="#41a5ee" /><path d="M9 10h27v8H9z" fill="#2b7cd3" /><path d="M9 18h27v8H9z" fill="#185abd" /><path d="M9 26h27v6q0 2-2 2H9z" fill="#103f91" />
    <rect x="0" y="9" width="18" height="18" rx="2" fill="#185abd" /><BadgeText x="9" y="22.5" fontSize="13" fill="#fff">W</BadgeText></> },
  { id: "cytoscape", run: 1, on: 1, stack: 1, art: <CytoLogo s={36} /> },
  { id: "cat", run: 1, art: <>
    <path d="M9 31l2-25 5 5h6l5-5 3 25z" fill="#1f3f72" /><path d="M9 30c-4 1-8-1-7-5l2-1" stroke="#1f3f72" strokeWidth="2" fill="none" />
    <circle cx="16" cy="16" r="1.3" fill="#bcd" /><circle cx="24" cy="16" r="1.3" fill="#bcd" /></> },
  { id: "snip", run: 1, stack: 1, art: <>
    <path d="M7 12C4 2 14-2 20 3M20 3c12 0 13 18 2 23" stroke="#d13c0c" strokeWidth="5" fill="none" /><path d="M7 10q-1 9 7 15" stroke="#b8320a" strokeWidth="3" fill="none" />
    <path d="M15 2h5l-1 22h-5zM27 12l-8 12-3-2 6-10z" fill="#d8d8d8" />
    <circle cx="8" cy="28" r="4" stroke="#1464b4" strokeWidth="3" fill="none" /><circle cx="19" cy="31" r="4" stroke="#1e96e0" strokeWidth="3" fill="none" /></> },
  { id: "outlook", run: 1, art: <>
    <path d="M8 10L21 1l15 10v20H8z" fill="#1479d0" /><path d="M36 8L18 22l18 9z" fill="#35bdf2" /><path d="M14 8l7-5 13 8-14 12z" fill="#0a4fa8" />
    <rect x="0" y="7" width="18" height="18" rx="2" fill="#0f78d4" /><BadgeText x="9" y="20.5" fontSize="13" fill="#fff">O</BadgeText>
    <rect x="11" y="23" width="25" height="12" rx="2.5" fill="#23e5e5" /><BadgeText x="23.5" y="32.3" fontSize="8.5" fill="#111">NEW</BadgeText></> },
];

const SideTabs = () => (
  <>
    <TabStrip $w={41}>
      <SideTab $h={140} $pt={18} $gap={6}><SideText>App Store</SideText><StoreIcon /></SideTab>
    </TabStrip>
    <TabStrip $w={43}>
      <SideTab $h={122}><SideText>Network</SideText><NetworkTabIcon /></SideTab>
      <SideTab $h={105}><SideText>Style</SideText><Rotated $deg={-90}><FaPaintBrush size={21} /></Rotated></SideTab>
      <SideTab $h={113}><SideText>Filter</SideText><Rotated $deg={-90}><FaFilter size={17} /></Rotated></SideTab>
      <SideTab $h={152}><SideText>Annotation</SideText><Boxed><Svg w={15} h={15}><path d="M1.500 1v13M1.500 7.500h12M13.500 4v7M1 2h4M1 13h4" stroke="#333" strokeWidth="2.2" /></Svg></Boxed></SideTab>
      <SideTab $h={168} $on $pt={18} $gap={5}><SideText>AutoAnnotate</SideText><AnnotateIcon /></SideTab>
      <SideTab $h={177} $pt={28}><SideText>Layout Tools</SideText><Ruler /></SideTab>
    </TabStrip>
  </>
);

const NodeTablePanel = () => (
  <TablePanel>
    <PanelHead $pl={19} $pr={17}>Node Table<Triangle /><DockIcons pinned /></PanelHead>
    <TableTools>
      <Tool $w={22}><FaCog size={23} color="#000" /></Tool>
      <Tool $w={86}><Columns /></Tool>
      <Tool $w={32}><ColumnOp plus /></Tool>
      <Tool $w={76}><ColumnOp /></Tool>
      <Tool $w={82}><Fx>f(x)</Fx></Tool>
      <Tool $w={27}><FaSearch size={25} color="#000" /></Tool>
      <Tool $w={141}><FileArrow /></Tool>
      <ExportTool><FileArrow out /></ExportTool>
    </TableTools>
    <TableHead>
      <Corner><Svg w={21} h={38}><path d="M21 0v38H0z" fill="#c4c4c4" /></Svg></Corner>
      <HeadCell $w={225}><HeadIcon><FaSitemap size={18} /></HeadIcon><HeadIcon><FaLock size={17} /></HeadIcon><HeadText $ml={16}>shared name</HeadText></HeadCell>
      <HeadCell $w={225}><HeadIcon><FaSitemap size={18} /></HeadIcon><HeadText $ml={28}>NumChildren</HeadText></HeadCell>
      <HeadCell $w={252}><HeadIcon><FaSitemap size={18} /></HeadIcon><HeadText $ml={28}>NumDescendents</HeadText></HeadCell>
      <HeadCell $w={195}><HeadIcon><FaSitemap size={18} /></HeadIcon><HeadText $ml={18}>cl1.Status</HeadText></HeadCell>
      <HeadCell $w={134} $on><HeadIcon><FaLock size={17} /></HeadIcon><HeadText $ml={14}>name</HeadText><HeadText $ml={24}><Chevron dir="up" color="#444" /></HeadText></HeadCell>
      <HeadCell $w={185}><HeadText $ml={14}>__mclCluster</HeadText></HeadCell>
      <HeadCell $w={97}><HeadText $ml={13}>Avera</HeadText></HeadCell>
    </TableHead>
    <TableBody>
      <Rows>
        {[...GENES, ""].map((g) => (
          <Row key={g}>
            <Gutter />
            <SharedCell>{g}</SharedCell>
            <StatusCell>{g && statusOf(g)}</StatusCell>
            <NameCell $on={g === "ATRX"}>{g}</NameCell>
            <NumCell>{g && "1"}</NumCell>
          </Row>
        ))}
      </Rows>
      <VScroll>
        <ScrollEnd><Chevron dir="up" sw={2.6} /></ScrollEnd>
        <VThumb />
        <ScrollEnd><Chevron sw={2.6} /></ScrollEnd>
      </VScroll>
    </TableBody>
    <HScroll>
      <HTrack><Chevron dir="left" sw={2.8} w={11} /><HThumb /><Chevron dir="right" sw={2.8} w={11} /></HTrack>
    </HScroll>
  </TablePanel>
);
const ExportTool = styled.div`
  margin-left: -34px;
`;
const ImportTableTool = styled.div`
  width: 36px;
  margin: 0 38px 0 -36px;
`;

export default function App() {
  return (
    <Screen>
      <Global />
      <TopEdge>
        <EdgePart $w={779} $h={1} $c="#222" /><EdgePart $w={72} $h={2} $c="#0078d7" />
        <EdgePart $w={290} $h={2} $c="#1c1c1c" /><EdgePart $w={779} $h={1} $c="#222" />
      </TopEdge>
      <TitleBar>
        <CytoLogo s={19} />
        <Title>Session: H:\Bioinformatics\1109STRING\Tempwork\color-cluster.cys</Title>
        <WindowButton><Svg w={15} h={15}><path d="M0 7.500h15" stroke="#000" /></Svg></WindowButton>
        <WindowButton><Svg w={15} h={15}><rect x=".5" y=".5" width="14" height="14" stroke="#000" /></Svg></WindowButton>
        <WindowButton><Svg w={15} h={15}><path d="M0 0l15 15M15 0L0 15" stroke="#000" /></Svg></WindowButton>
      </TitleBar>
      <MenuBar>{MENUS.map(([t, w]) => <MenuTitle key={t} $w={w}>{t}</MenuTitle>)}</MenuBar>
      <Toolbar>
        <Tool $w={82}><RingLogo /></Tool>
        <Tool $w={84}><Folder /></Tool>
        <Tool $w={28}><Floppy /></Tool>
        <Tool $w={140}><ImportNet /></Tool>
        <ImportTableTool><ImportTable /></ImportTableTool>
        <Tool $w={56}><Lens><path d="M9 16h14M16 9v14" /></Lens></Tool>
        <Tool><Lens><path d="M9 16h14" /></Lens></Tool>
        <Tool><Lens><path d="M17 9h6v6M9 17v6h6" strokeWidth="2.6" /></Lens></Tool>
        <Tool><Lens><path d="M9 16l5 6 9-12" strokeWidth="3.6" /></Lens></Tool>
        <Tool $w={112}><Glyph d={REFRESH} size={34} w={33} color={NAVY} /></Tool>
        <Tool $w={57}><Houses /></Tool>
        <Tool $w={51}><EyeOff /></Tool>
        <Tool $w={57}><Eye /></Tool>
        <Tool $w={112}><NetDocs /></Tool>
        <SearchBox>Enter search term...</SearchBox>
        <Tool><HomeIcon /></Tool><Tool><Globe /></Tool><Tool><HelpDisc>?</HelpDisc></Tool><Tool><FaBell size={36} color="#bcbcbc" /></Tool>
      </Toolbar>
      <Main>
        <SideTabs />
        <Panel $w={581}>
          <PanelHead $pl={20} $pr={18}>AutoAnnotate<Triangle /><DockIcons /></PanelHead>
          <ControlRow>
            <Combo>MCL Cluster Annotation Set6i<Chevron w={13} sw={1.2} /></Combo>
            <PushButton $w={62} $ml={8}><Svg w={17} h={17}><path d="M0 8.500h17M8.500 0v17" stroke="#000" strokeWidth="4" /></Svg></PushButton>
            <PushButton $w={65} $ml={10}><Glyph d={REFRESH} size={22} color="#000" /></PushButton>
            <PushButton $w={65} $ml={10}><Svg w={19} h={16}><path d="M0 2h19M0 8h19M0 14h19" stroke="#000" strokeWidth="2.8" /></Svg></PushButton>
          </ControlRow>
          <ClusterTable>
            <ClusterHead>
              <ClusterHeadCell $first>Cluster</ClusterHeadCell>
              <ClusterHeadCell><SortMark><Chevron sw={1.2} color="#888" /></SortMark>Nodes</ClusterHeadCell>
              <ClusterHeadCell>Collapsed</ClusterHeadCell>
            </ClusterHead>
            {CLUSTER_NAMES.map((n, i) => (
              <ClusterRow key={n} $on={i === 0}>
                <ClusterCell>{n}</ClusterCell>
                {i === 0 && <ClusterCell $num>37</ClusterCell>}
              </ClusterRow>
            ))}
          </ClusterTable>
          <ClusterStatus>21 clusters, 1 selected</ClusterStatus>
        </Panel>
        <Splitter />
        <Centre><NetworkCanvas /></Centre>
        <Splitter />
        <Panel $w={367}>
          <PanelHead $pl={20} $pr={18}>AutoAnnotate Display<Triangle /><DockIcons /></PanelHead>
          <OptionsBox>
            <OptionRow $h={30} $mt={10}>
              Shape:
              <PushButton $on $w={59} $h={29} $ml={18}><Svg w={16} h={16}><circle cx="8" cy="8" r="6.3" stroke="#222" strokeWidth="2" /></Svg></PushButton>
              <PushButton $w={59} $h={29} $ml={10}><Svg w={15} h={15}><rect x="1" y="1" width="12.5" height="12.5" rx="2" stroke="#444" strokeWidth="1.6" /></Svg></PushButton>
            </OptionRow>
            <OptionRow $h={20} $mt={15}>Border Width<OptionValue>3</OptionValue></OptionRow>
            <Slider><Thumb /></Slider>
          </OptionsBox>
        </Panel>
        <TabStrip $w={38}>
          <SideTab $h={240} $on $pt={13} $pl={4} $gap={5}><AnnotateIcon flip /><SideText $down>AutoAnnotate Display</SideText></SideTab>
        </TabStrip>
      </Main>
      <BottomBar>
        <CommandLine>
          <Svg w={21} h={18}><rect width="21" height="18" rx="1.5" fill="#3c3c3c" /><path d="M3 4l5 4.500L3 13M9 13h6" stroke="#fff" strokeWidth="1.8" /></Svg>
          Command Line
        </CommandLine>
        <BottomTab $w={150} $on><TableGlyph kind="node" />Node Table</BottomTab>
        <BottomTab $w={150}><TableGlyph kind="edge" />Edge Table</BottomTab>
        <BottomTab $w={177}><TableGlyph kind="net" />Network Table</BottomTab>
        <BottomTab $w={241}><Glyph d={REFRESH} size={20} color="#444" />Enrichment Table</BottomTab>
      </BottomBar>
      <Taskbar>
        <SystemButton><Svg w={24} h={24}><path d="M0 3.500l10-1.500v9.500H0zM11.500 1.800L24 0v11.500H11.500zM0 12.800h10v9.500L0 21zM11.500 12.800H24V24l-12.500-1.800z" fill="#fff" /></Svg></SystemButton>
        <SystemButton><Svg w={34} h={34}><circle cx="20" cy="13.5" r="12" stroke="#fff" strokeWidth="2.8" /><path d="M12 22L1.500 32.500" stroke="#fff" strokeWidth="3.2" /></Svg></SystemButton>
        <SystemButton><Svg w={24} h={24}><path d="M.5 0v3.500h15V0M.5 24v-3.500h15V24M.5 6.500h15v11H.5zM22.500 0v6M22.500 11v13" stroke="#fff" strokeWidth="1.4" /><path d="M21 7h3v3h-3z" fill="#fff" /></Svg></SystemButton>
        {APPS.map((a, i) => (
          <AppButton key={a.id} $ml={i === 0 ? 3 : 0} $on={a.on}>
            <Svg w={36} h={36}>{a.art}</Svg>
            {a.run && <Running $stack={a.stack} $wide={a.on} />}
          </AppButton>
        ))}
        <Tray>
          <TrayItem $w={36}><Svg w={18} h={11}><path d="M1 10l8-8 8 8" stroke="#fff" strokeWidth="1.5" /></Svg></TrayItem>
          <TrayItem $w={35}><Svg w={19} h={24}><rect width="19" height="24" rx="9" fill="#0a84f5" /><path d="M5 8l9 8-4.500 4V4L14 8l-9 8" stroke="#fff" strokeWidth="1.5" /></Svg></TrayItem>
          <TrayItem $w={36}><Svg w={23} h={20}><path d="M1 7h4l5-5v16l-5-5H1z" stroke="#fff" strokeWidth="1.4" /><path d="M13 7q2 3 0 6" stroke="#fff" strokeWidth="1.3" /><path d="M16 5q4 5 0 10M19 3q5 7 0 14" stroke="#999" strokeWidth="1.3" /></Svg></TrayItem>
          <TrayItem $w={36}><Svg w={24} h={24}><ellipse cx="10" cy="11" rx="7.5" ry="11" fill="#111" /><ellipse cx="10" cy="17" rx="5" ry="6" fill="#fff" /><path d="M3 11q7 4 14 0v3q-7 4-12 1l-2 5-3-1z" fill="#e02020" /><circle cx="8" cy="5" r="1.8" fill="#fff" /><circle cx="12" cy="5" r="1.8" fill="#fff" /><path d="M6 8h8l-4 3zM2 21h7v3H2z" fill="#f7a51c" /><rect x="11" y="11" width="13" height="9" rx="1" fill="#f9b233" /><path d="M14 20v3l4-3z" fill="#f9b233" /></Svg></TrayItem>
          <TrayItem $w={37}><Svg w={23} h={20}><rect x=".7" y="2.7" width="20" height="12" stroke="#fff" strokeWidth="1.4" /><path d="M3 5h14v8H3z" fill="#fff" /><circle cx="16.5" cy="13" r="6.5" fill="#118a30" /><path d="M16.500 8q4 4 0 8-4-4 0-8zM16.500 11v7" stroke="#fff" strokeWidth="1.2" /></Svg></TrayItem>
          <TrayItem $w={36}><Svg w={20} h={19}><g stroke="#ddd" strokeWidth="1.3"><path d="M1 18Q2 3 19 1M5 18Q6 7 19 5.500M9 18q1-7 10-8M13 18q1-3 6-4" /></g><circle cx="18" cy="17" r="1.8" fill="#fff" /></Svg></TrayItem>
          <TrayItem $w={44}><Svg w={22} h={22}><path d="M8 14L17 1l3 2-8 13-5 3zM10 11q-8-1-8 6 0 5 5 3 4-2 3-8M13 12q4-3 5 0t3-1" stroke="#fff" strokeWidth="1.4" /></Svg></TrayItem>
          <TrayItem $w={40}><Ime>中</Ime></TrayItem>
          <TrayItem $w={48}><Svg w={24} h={24}><circle cx="12" cy="12" r="11.5" fill="#fff" /><circle cx="12" cy="12" r="10.7" stroke="#4a7bf0" strokeWidth="1.8" /><BadgeText x="12" y="15" fontSize="8" fill="#2f62e8">iFLY</BadgeText></Svg></TrayItem>
          <Clock>4:03<br />2023/11/11</Clock>
          <TrayItem $w={70}><Svg w={36} h={36}><path d="M2 0h23v17H13l-5 6v-6H2z" fill="#fff" /><path d="M6 5h14M6 9h14M6 13h9" stroke="#434343" strokeWidth="1.3" /><circle cx="24.5" cy="24" r="11.5" fill="#3b3b3b" stroke="#999" strokeWidth="1.2" /><BadgeText x="24.5" y="30" fontSize="17" fill="#fff">2</BadgeText></Svg></TrayItem>
          <DesktopPeek />
        </Tray>
      </Taskbar>
      <NodeTablePanel />
      <ContextMenu>
        <MenuItem><MenuIcon />Apply to entire column</MenuItem>
        <MenuItem $h={38}><MenuIcon />Apply to selected nodes</MenuItem>
        <MenuRule />
        <MenuItem $h={39}><MenuIcon><Glyph d={EDIT} size={21} color="#222" /></MenuIcon>Edit</MenuItem>
        <MenuItem $on><MenuIcon><Glyph d={COPY} size={21} color="#222" /></MenuIcon>Copy</MenuItem>
        <MenuItem $h={39}><MenuIcon><Glyph d={PASTE} size={21} color="#111" /></MenuIcon>Paste</MenuItem>
        <MenuRule />
        <MenuItem><MenuIcon><Glyph d={COPY} size={21} color="#222" /></MenuIcon>Copy Selected</MenuItem>
        <MenuRule />
        <MenuItem $h={42}><MenuIcon />Select nodes from selected rows</MenuItem>
      </ContextMenu>
      <Tooltip>BRCA1</Tooltip>
    </Screen>
  );
}
